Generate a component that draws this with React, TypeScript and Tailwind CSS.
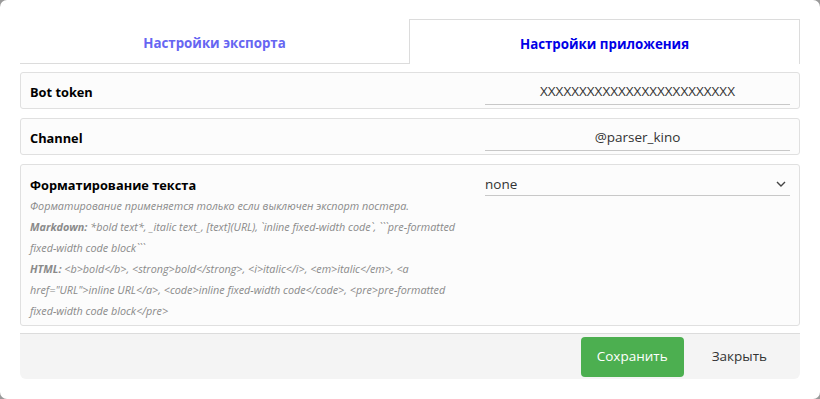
import React from "react";

function Row({ label, value }: { label: string; value: string }) {
  return (
    <div className="flex items-center h-[37px] border border-[#e0e0e0] bg-[#fcfcfc] rounded-[3px] pl-[9px] pr-[9px]">
      <div className="flex-1 font-bold text-[12.8px] text-black pt-[5px]">{label}</div>
      <div className="w-[305px] h-[28px] border-b border-[#c8c8c8] flex items-center justify-center text-[13.5px] text-[#333] pt-[3px]">
        {value}
      </div>
    </div>
  );
}

export default function App() {
  return (
    <div className="w-[820px] h-[399px] bg-[#9a9a9a]" style={{ fontFamily: '"Open Sans", "Noto Sans", sans-serif' }}>
      <div className="w-full h-full bg-white rounded-[7px] pt-[19px] px-[20px] flex flex-col">
        <div className="flex h-[45px]">
          <div className="flex-1 flex items-center justify-center border-b border-[#dcdcdc] text-[13.3px] font-bold text-[#6666f2] pt-[5px]">
            Настройки экспорта
          </div>
          <div className="flex-1 flex items-center justify-center border border-b-0 border-[#dcdcdc] text-[13.3px] font-bold text-[#0000e6] pt-[5px]">
            Настройки приложения
          </div>
        </div>
        <div className="flex flex-col gap-[9px] mt-[8px]">
          <Row label="Bot token" value="XXXXXXXXXXXXXXXXXXXXXXXXX" />
          <Row label="Channel" value="@parser_kino" />
          <div className="flex border border-[#e0e0e0] bg-[#fcfcfc] rounded-[3px] pl-[9px] pr-[9px] pt-[8px] h-[162px]">
            <div className="flex-1 pr-[8px]">
              <div className="font-bold text-[12.8px] text-black leading-[20px] mt-[2px]">Форматирование текста</div>
              <div className="text-[10.8px] italic text-[#8a8a8a] leading-[21px] whitespace-nowrap">
                <div>Форматирование применяется только если выключен экспорт постера.</div>
                <div>
                  <b>Markdown:</b> *bold text*, _italic text_, [text](URL), `inline fixed-width code`, ```pre-formatted
                </div>
                <div>fixed-width code block```</div>
                <div>
                  <b>HTML:</b> &lt;b&gt;bold&lt;/b&gt;, &lt;strong&gt;bold&lt;/strong&gt;, &lt;i&gt;italic&lt;/i&gt;, &lt;em&gt;italic&lt;/em&gt;, &lt;a
                </div>
                <div>href="URL"&gt;inline URL&lt;/a&gt;, &lt;code&gt;inline fixed-width code&lt;/code&gt;, &lt;pre&gt;pre-formatted</div>
                <div>fixed-width code block&lt;/pre&gt;</div>
              </div>
            </div>
            <div className="w-[305px] h-[23px] border-b border-[#c8c8c8] flex items-center justify-between text-[13.5px] text-[#333]">
              <span>none</span>
              <svg width="10" height="6" viewBox="0 0 10 6" className="mr-[4px]">
                <path d="M1 1 L5 5 L9 1" fill="none" stroke="#444" strokeWidth="1.4" />
              </svg>
            </div>
          </div>
        </div>
        <div className="mt-[7px] h-[46px] bg-[#f4f4f4] border-t border-[#dcdcdc] rounded-b-[6px] flex items-center justify-end pr-[33px]">
          <button className="h-[40px] w-[103px] bg-[#4caf50] rounded-[4px] text-white text-[13.5px]">Сохранить</button>
          <span className="ml-[28px] text-[13.5px] text-[#333]">Закрыть</span>
        </div>
      </div>
    </div>
  );
}
